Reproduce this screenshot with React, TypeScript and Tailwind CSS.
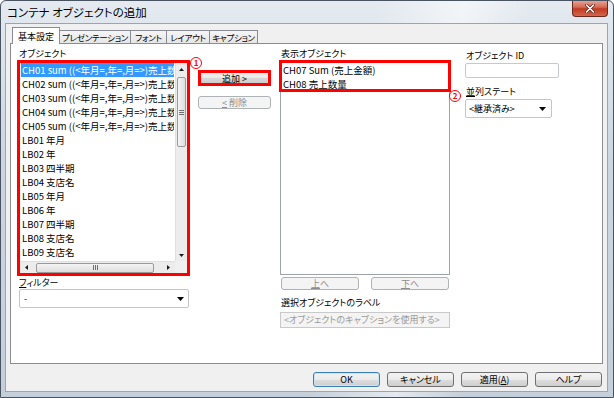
import React from "react";

const TriDown = ({ w = 7, h = 4 }: { w?: number; h?: number }) => (
  <svg width={w} height={h} viewBox="0 0 7 4">
    <path d="M0 0h7L3.5 4z" fill="#000" />
  </svg>
);
const TriUp = () => (
  <svg width="5" height="3" viewBox="0 0 5 3">
    <path d="M0 3h5L2.5 0z" fill="#1a1a1a" />
  </svg>
);
const TriDownS = () => (
  <svg width="5" height="3" viewBox="0 0 5 3">
    <path d="M0 0h5L2.5 3z" fill="#1a1a1a" />
  </svg>
);
const TriLeft = () => (
  <svg width="3" height="5" viewBox="0 0 3 5">
    <path d="M3 0v5L0 2.5z" fill="#1a1a1a" />
  </svg>
);
const TriRight = () => (
  <svg width="3" height="5" viewBox="0 0 3 5">
    <path d="M0 0v5L3 2.5z" fill="#1a1a1a" />
  </svg>
);

const btn =
  "h-[15px] w-[67px] rounded-[3px] border flex items-center justify-center text-[9px] leading-none text-black bg-[linear-gradient(#f2f2f2,#ebebeb_50%,#dddddd_50%,#cfcfcf)]";
const disBtn =
  "rounded-[3px] border border-[#adb2b5] bg-[#f4f4f4] flex items-center justify-center text-[9px] leading-none text-[#8d8d8d]";
const tab =
  "h-[13px] border-t border-r border-[#898c95] bg-[linear-gradient(#f5f5f5,#e6e6e6)] flex items-center justify-center whitespace-nowrap tracking-[-0.3px]";

const rows = [
  "CH01 sum ((<年月=,年=,月=>)売上数量",
  "CH02 sum ((<年月=,年=,月=>)売上数量",
  "CH03 sum ((<年月=,年=,月=>)売上数量",
  "CH04 sum ((<年月=,年=,月=>)売上数量",
  "CH05 sum ((<年月=,年=,月=>)売上数量",
  "LB01 年月",
  "LB02 年",
  "LB03 四半期",
  "LB04 支店名",
  "LB05 年月",
  "LB06 年",
  "LB07 四半期",
  "LB08 支店名",
  "LB09 支店名",
  "LB10 支店名",
];

const Circle = ({ n, className }: { n: string; className: string }) => (
  <div
    className={
      "absolute w-[12px] h-[12px] rounded-full border-[1.5px] border-[#ff0000] bg-white text-[#ff0000] text-[8px] font-bold flex items-center justify-center leading-none " +
      className
    }
  >
    {n}
  </div>
);

export default function App() {
  return (
    <div className="w-[614px] h-[398px] overflow-hidden flex flex-col border border-[#4a5360] rounded-t-[6px] bg-[linear-gradient(100deg,rgba(255,255,255,0)_55%,rgba(255,255,255,0.55)_68%,rgba(255,255,255,0)_78%),linear-gradient(180deg,#e4eaf0,#cbd6e1_40%,#c3cfdb)] font-['Noto_Sans_CJK_JP','Liberation_Sans',sans-serif] [font-feature-settings:'palt']">
      {/* title bar */}
      <div className="h-[22px] flex items-start justify-between shrink-0">
        <div className="pl-[6px] pt-[3px] text-[11.5px] leading-[16px] text-black">
          コンテナ オブジェクトの追加
        </div>
        <div className="mr-[5px] -mt-[1px] w-[36px] h-[17px] rounded-b-[4px] border border-[#6b2a1f] border-t-0 bg-[linear-gradient(#e9a99b,#d66a55_45%,#c13a22_55%,#d4654a)] flex items-center justify-center">
          <svg width="10" height="9" viewBox="0 0 10 9">
            <path d="M1.5 1l7 7M8.5 1l-7 7" stroke="#5a2418" strokeWidth="3" strokeLinecap="round" />
            <path d="M1.5 1l7 7M8.5 1l-7 7" stroke="#fff" strokeWidth="1.6" strokeLinecap="round" />
          </svg>
        </div>
      </div>

      {/* client area */}
      <div className="flex-1 ml-[4px] mr-[5px] mb-[5px] border border-[#9aa5b1] bg-[#f0f0f0] flex flex-col px-[4px] pt-[3px]">
        {/* tabs */}
        <div className="relative z-10 flex items-end h-[16px] pl-[2px] text-[8.5px] leading-none text-black">
          <div className="w-[48px] h-[17px] -mb-[1px] bg-white border border-b-0 border-[#898c95] flex items-center justify-center whitespace-nowrap text-[9px]">
            基本設定
          </div>
          <div className={tab + " w-[71px]"}>プレゼンテーション</div>
          <div className={tab + " w-[36px]"}>フォント</div>
          <div className={tab + " w-[43px]"}>レイアウト</div>
          <div className={tab + " w-[48px]"}>キャプション</div>
        </div>

        {/* panel */}
        <div className="h-[321px] border border-[#898c95] bg-white flex pl-[6px] pt-[3px] text-[9px] text-black">
          {/* left column */}
          <div className="w-[173px] flex flex-col">
            <div className="h-[13px] leading-[13px] pl-[2px]">オブジェクト</div>
            <div className="relative h-[216px] border-[3px] border-[#ff0000] bg-white flex flex-col">
              <Circle n="1" className="left-[170px] -top-[6px]" />
              <div className="flex flex-1 min-h-0">
                <div className="flex-1 overflow-hidden px-[1px] text-[9.5px]">
                  {rows.map((r, i) => (
                    <div
                      key={r + i}
                      className={
                        "h-[14px] leading-[14px] pl-[1px] whitespace-nowrap overflow-hidden " +
                        (i === 0 ? "bg-[#3399ff] text-white" : "text-black")
                      }
                    >
                      {r}
                    </div>
                  ))}
                </div>
                {/* vertical scrollbar */}
                <div className="w-[12px] flex flex-col bg-[#ececec] border-l border-[#e0e0e0]">
                  <div className="h-[12px] flex items-center justify-center">
                    <TriUp />
                  </div>
                  <div className="mt-[2px] mx-[1px] h-[70px] rounded-[2px] border border-[#9a9a9a] bg-[linear-gradient(90deg,#f4f4f4,#dedede)] flex flex-col items-center justify-center gap-[1px]">
                    <div className="w-[5px] h-[1px] bg-[#6f6f6f]" />
                    <div className="w-[5px] h-[1px] bg-[#6f6f6f]" />
                    <div className="w-[5px] h-[1px] bg-[#6f6f6f]" />
                  </div>
                  <div className="flex-1" />
                  <div className="h-[12px] flex items-center justify-center">
                    <TriDownS />
                  </div>
                </div>
              </div>
              {/* horizontal scrollbar */}
              <div className="h-[12px] flex">
                <div className="flex-1 flex items-center bg-[#ececec] border-t border-[#e0e0e0]">
                  <div className="w-[13px] flex items-center justify-center">
                    <TriLeft />
                  </div>
                  <div className="ml-[3px] w-[118px] h-[10px] rounded-[2px] border border-[#9a9a9a] bg-[linear-gradient(#f4f4f4,#dedede)] flex items-center justify-center gap-[1px]">
                    <div className="w-[1px] h-[5px] bg-[#6f6f6f]" />
                    <div className="w-[1px] h-[5px] bg-[#6f6f6f]" />
                    <div className="w-[1px] h-[5px] bg-[#6f6f6f]" />
                  </div>
                  <div className="flex-1" />
                  <div className="w-[13px] flex items-center justify-center">
                    <TriRight />
                  </div>
                </div>
                <div className="w-[12px] bg-[#f0f0f0]" />
              </div>
            </div>
            <div className="mt-[1px] h-[12px] leading-[12px] pl-[2px]">
              <span className="underline">フ</span>ィルター
            </div>
            <div className="ml-[2px] w-[170px] h-[19px] border border-[#c5c5c5] rounded-[2px] bg-white flex items-center justify-between pl-[4px] pr-[4px]">
              <span>-</span>
              <TriDown />
            </div>
          </div>

          {/* middle column */}
          <div className="ml-[8px] w-[73px] flex flex-col">
            <div className="mt-[23px] h-[16px] border-[3px] border-[#ff0000] bg-[linear-gradient(#f2f2f2,#e8e8e8_50%,#d8d8d8_50%,#cdcdcd)] flex items-center justify-center text-[9px] leading-none">
              追加 &gt;
            </div>
            <div className={disBtn + " mt-[10px] h-[13px]"}>
              <span className="underline">&lt;</span>&nbsp;削除
            </div>
          </div>

          {/* right list column */}
          <div className="ml-[9px] w-[170px] flex flex-col">
            <div className="h-[13px] leading-[13px] pl-[1px]">表示オブジェクト</div>
            <div className="relative h-[215px] border border-[#9da3ab] bg-white pt-[2px] pl-[2px] text-[9.5px]">
              <div className="h-[14px] leading-[14px] whitespace-nowrap">CH07 Sum (売上金額)</div>
              <div className="h-[14px] leading-[14px] whitespace-nowrap">CH08 売上数量</div>
              <div className="absolute -left-[2px] -top-[1px] w-[172px] h-[32px] border-[3px] border-[#ff0000]" />
              <Circle n="2" className="left-[168px] top-[29px]" />
            </div>
            <div className="mt-[2px] h-[13px] flex justify-between px-[1px]">
              <div className={disBtn + " w-[78px] h-[13px]"}>
                <span className="underline">上</span>へ
              </div>
              <div className={disBtn + " w-[78px] h-[13px]"}>
                <span className="underline">下</span>へ
              </div>
            </div>
            <div className="mt-[7px] h-[12px] leading-[12px] pl-[1px]">選択オブジェクトのラベル</div>
            <div className="mt-[3px] h-[16px] border border-[#c9c9c9] bg-[#f4f4f4] flex items-center pl-[3px] text-[#9a9a9a] whitespace-nowrap">
              &lt;オブジェクトのキャプションを使用する&gt;
            </div>
          </div>

          {/* right-most column */}
          <div className="ml-[15px] w-[96px] flex flex-col">
            <div className="mt-[2px] h-[13px] leading-[13px] pl-[1px]">オブジェクト ID</div>
            <div className="mt-[1px] w-[94px] h-[15px] border border-[#c5c9cf] rounded-[2px] bg-white" />
            <div className="mt-[8px] h-[12px] leading-[12px] pl-[1px]">
              <span className="underline">並</span>列ステート
            </div>
            <div className="mt-[1px] w-[87px] h-[19px] border border-[#c5c5c5] rounded-[2px] bg-white flex items-center justify-between pl-[3px] pr-[5px] whitespace-nowrap">
              <span>&lt;継承済み&gt;</span>
              <TriDown />
            </div>
          </div>
        </div>

        {/* bottom buttons */}
        <div className="mt-[8px] flex justify-end gap-[7px] pr-[1px]">
          <div className={btn + " border-[#3c7fb1] shadow-[inset_0_0_0_1px_#c6e6f8]"}>OK</div>
          <div className={btn + " border-[#707070]"}>キャンセル</div>
          <div className={btn + " border-[#707070]"}>
            適用(<span className="underline">A</span>)
          </div>
          <div className={btn + " border-[#707070]"}>ヘルプ</div>
        </div>
      </div>
    </div>
  );
}
